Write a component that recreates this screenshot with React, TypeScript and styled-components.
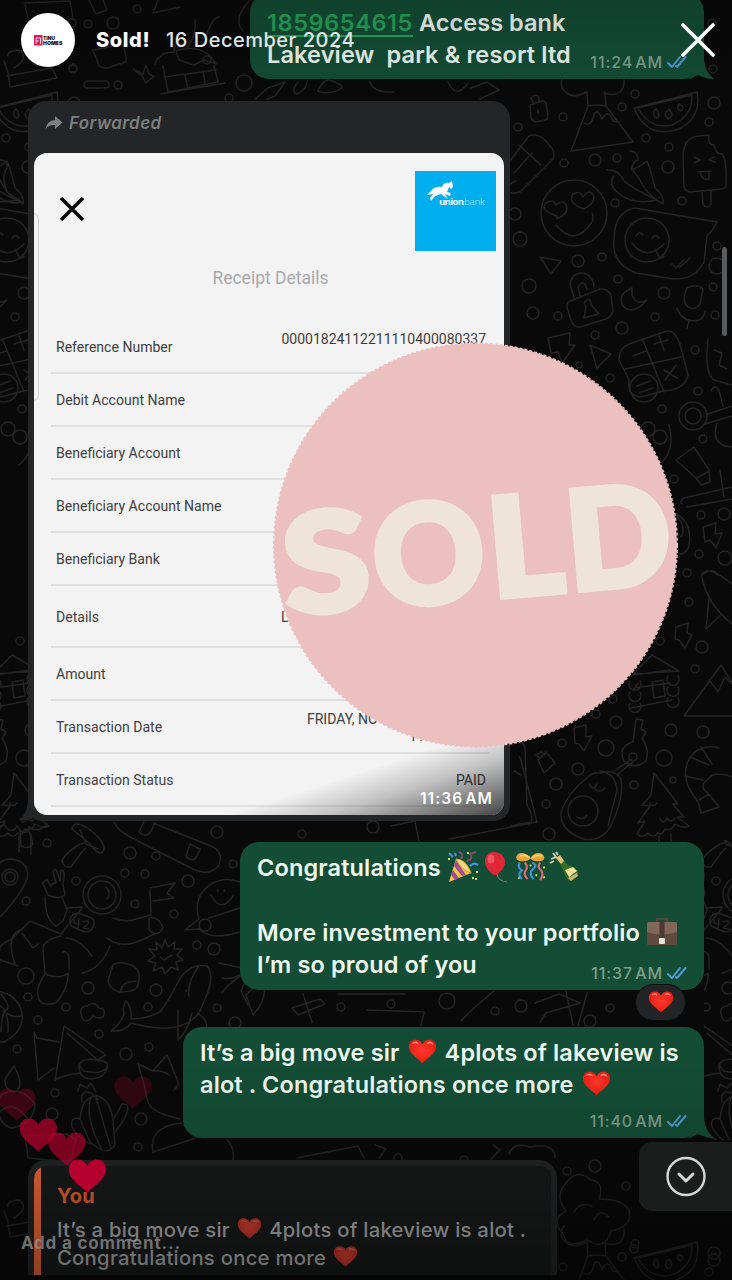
import React from 'react';
import styled, { createGlobalStyle } from 'styled-components';

const Global = createGlobalStyle`
  *, *::before, *::after { box-sizing: border-box; }
  body { margin: 0; background: #0a0a0a; }
`;

const Screen = styled.main`
  position: relative;
  width: 732px;
  height: 1280px;
  overflow: hidden;
  background: #090909;
  font-family: Inter, "Liberation Sans", sans-serif;
`;

const Wallpaper = styled.svg`
  position: absolute;
  inset: 0;
`;

const Chat = styled.section`
  position: relative;
  display: flex;
  flex-direction: column;
  height: 1275px;
  padding: 0 28px;
  overflow: hidden;
`;

const Bubble = styled.article<{ $width: number; $height: number; $top: number }>`
  position: relative;
  flex: none;
  align-self: flex-end;
  width: ${p => p.$width}px;
  height: ${p => p.$height}px;
  margin-top: ${p => p.$top}px;
  padding: 9px 17px;
  border-radius: 19px;
  background: #134d35;
`;

const Tail = styled.svg`
  position: absolute;
  right: -10px;
  bottom: 0;
`;

const Line = styled.p<{ $spacing?: number }>`
  display: flex;
  align-items: center;
  height: 32.5px;
  margin: 0;
  color: #eef8f1;
  font-size: 23.5px;
  font-weight: 600;
  white-space: pre;
  letter-spacing: ${p => p.$spacing ?? 0.14}px;
`;

const FirstBubbleText = styled.div`
  padding-top: 4px;
`;

const AccountLink = styled.span`
  color: #25a25a;
  letter-spacing: 0.6px;
  text-decoration: underline;
  text-decoration-thickness: 2px;
  text-underline-offset: 4px;
`;

const Stamp = styled.div`
  position: absolute;
  right: 17px;
  bottom: 8px;
  display: flex;
  align-items: center;
  gap: 4px;
  color: #7c9f8d;
  font-size: 16px;
  font-weight: 500;
  line-height: 18px;
  letter-spacing: 0.9px;
  word-spacing: -3px;
`;

const Reaction = styled.div`
  position: absolute;
  right: 18px;
  bottom: -31px;
  display: flex;
  align-items: center;
  justify-content: center;
  width: 51px;
  height: 37px;
  border: 1px solid #0c0d0d;
  border-radius: 19px;
  background: #222425;
`;

const ForwardCard = styled.article`
  position: relative;
  display: flex;
  flex: none;
  flex-direction: column;
  width: 482px;
  height: 720px;
  margin-top: 22px;
  padding: 0 6px 6px;
  border-radius: 18px 18px 16px 14px;
  background: #232526;
`;

const CardTail = styled.svg`
  position: absolute;
  left: -9px;
  bottom: 0;
`;

const ForwardLabel = styled.header`
  display: flex;
  align-items: center;
  gap: 6px;
  height: 52px;
  padding: 0 0 8px 11px;
  color: #7d7e7f;
  font-size: 17px;
  font-style: italic;
  font-weight: 600;
  letter-spacing: 0.4px;
`;

const Receipt = styled.div`
  position: relative;
  display: flex;
  flex-direction: column;
  height: 662px;
  padding: 18px 14px 0 17px;
  overflow: hidden;
  border-radius: 13px;
  background: #f3f3f3;
  color: #404040;
  font-family: Roboto, sans-serif;
`;

const ReceiptEdge = styled.i`
  position: absolute;
  top: 60px;
  left: -8px;
  width: 13px;
  height: 188px;
  border: 1px solid #cfcfcf;
  border-radius: 6px;
`;

const ReceiptTop = styled.div`
  display: flex;
  justify-content: space-between;
  height: 92px;
  margin-right: -6px;
`;

const CloseReceipt = styled.svg`
  margin: 25px 0 0 8px;
`;

const BankLogo = styled.div`
  width: 81px;
  height: 80px;
  background: #00adef;
`;

const ReceiptTitle = styled.h1`
  height: 58px;
  margin: 0;
  color: #a9a9ab;
  font-size: 17.5px;
  font-weight: 400;
  line-height: 31px;
  text-align: center;
`;

const Row = styled.div<{ $height?: number }>`
  display: flex;
  flex: none;
  align-items: center;
  justify-content: space-between;
  height: ${p => p.$height ?? 53}px;
  padding: 1px 4px 0 5px;
  border-bottom: 2px solid #e0e0e0;
  font-size: 14.05px;
`;

const Value = styled.span`
  align-self: flex-start;
  margin-top: 9px;
  font-size: 14px;
  line-height: 17px;
  text-align: right;
  white-space: pre;
`;

const StatusValue = styled.span`
  font-size: 14px;
`;

const Shade = styled.div`
  position: absolute;
  right: 0;
  bottom: 0;
  width: 100%;
  height: 85px;
  background: linear-gradient(162deg, transparent 62%, rgba(0, 0, 0, 0.2) 76%, rgba(0, 0, 0, 0.72) 100%);
`;

const PhotoTime = styled.time`
  position: absolute;
  right: 11px;
  bottom: 6px;
  color: #fff;
  font-family: Inter, sans-serif;
  font-size: 15.5px;
  font-weight: 600;
  line-height: 20px;
  letter-spacing: 1.1px;
  word-spacing: -3px;
`;

const Quote = styled.article`
  display: flex;
  flex: none;
  width: 529px;
  height: 135px;
  margin-top: 22px;
  padding: 6px;
  border-radius: 18px;
  background: #232526;
`;

const QuoteBody = styled.div`
  flex: 1;
  display: flex;
  overflow: hidden;
  border-radius: 13px 10px 0 0;
  background: #191b1b;
`;

const QuoteBar = styled.i`
  width: 7px;
  background: #f06a38;
`;

const QuoteContent = styled.div`
  padding: 16px 0 0 16px;
`;

const QuoteName = styled.strong`
  display: block;
  color: #e8612f;
  font-size: 20px;
  font-weight: 700;
  line-height: 28px;
  letter-spacing: 0.3px;
`;

const QuoteLine = styled.p`
  display: flex;
  align-items: center;
  height: 28px;
  margin: 0;
  color: #b2b4b4;
  font-size: 20.3px;
  font-weight: 550;
  letter-spacing: 0.25px;
  white-space: pre;
`;

const QuoteText = styled.div`
  margin-top: 5.5px;
`;

const Glyph = styled.svg<{ $raise?: number; $left?: number; $right?: number }>`
  flex: none;
  margin: 0 ${p => p.$right ?? 0}px ${p => p.$raise ?? 0}px ${p => p.$left ?? 0}px;
`;

const Sticker = styled.svg`
  position: absolute;
  top: 341px;
  left: 271px;
`;

const Letter = styled.text`
  fill: #eee4da;
  stroke: #eee4da;
  stroke-width: 5.5px;
  stroke-linejoin: miter;
  font-family: Lato, sans-serif;
  font-size: 138px;
  font-weight: 900;
`;

const Veil = styled.div`
  position: absolute;
  inset: 0;
  background: linear-gradient(to bottom, rgba(0, 0, 0, 0.16), transparent 110px, transparent 1060px, rgba(0, 0, 0, 0.1) 1140px, rgba(0, 0, 0, 0.42) 1280px);
`;

const StoryHeader = styled.header`
  position: absolute;
  top: 13px;
  left: 21px;
  right: 17px;
  display: flex;
  align-items: center;
  height: 54px;
  color: #fff;
  font-size: 20px;
  white-space: nowrap;
`;

const Avatar = styled.div`
  width: 54px;
  height: 54px;
  margin-right: 21px;
  border-radius: 50%;
  background: #fff;
`;

const Title = styled.strong`
  width: 70px;
  font-weight: 850;
  letter-spacing: 0.6px;
`;

const Posted = styled.span`
  flex: 1;
  color: #e2e6e4;
  font-weight: 550;
  letter-spacing: 0.5px;
`;

const ScrollThumb = styled.div`
  position: absolute;
  top: 247px;
  right: 5px;
  width: 5px;
  height: 89px;
  border-radius: 3px;
  background: #58595a;
`;

const Jump = styled.button`
  position: absolute;
  top: 1142px;
  right: 0;
  display: flex;
  align-items: center;
  justify-content: center;
  width: 93px;
  height: 69px;
  padding: 0;
  border: 0;
  border-radius: 13px 0 0 13px;
  background: #1b1c1c;
`;

const FloatingHearts = styled.svg`
  position: absolute;
  top: 1070px;
  left: 0;
`;

const Comment = styled.div`
  position: absolute;
  top: 1231px;
  left: 21px;
  color: rgba(150, 150, 150, 0.72);
  font-size: 17px;
  font-weight: 700;
  line-height: 24px;
  letter-spacing: 0.8px;
`;

const HEART = 'M16 28C12 23 1 18 1 9.5C1 4.5 4.6 2 8.4 2C12 2 14.6 4 16 7C17.4 4 20 2 23.6 2C27.4 2 31 4.5 31 9.5C31 18 20 23 16 28Z';

const RedHeart = ({ size = 29, muted = false, left = 0, right = 0 }: { size?: number; muted?: boolean; left?: number; right?: number }) => (
  <Glyph width={size} height={size} viewBox="0 0 32 30" $raise={2} $left={left} $right={right}>
    <defs>
      <radialGradient id={`red${size}`} cx=".5" cy=".45" r=".6">
        <stop offset="0" stopColor={muted ? '#e04433' : '#ff3a2c'} />
        <stop offset="1" stopColor={muted ? '#bd3025' : '#e8190f'} />
      </radialGradient>
    </defs>
    <path d={HEART} fill={`url(#red${size})`} />
    <path d="M4 7Q5 4 9 4Q12 5 12 7Q7 5 4 7M20 7Q21 4 24 4Q28 5 28 8Q25 5 20 7" fill="#fff" opacity={muted ? 0.25 : 0.45} />
  </Glyph>
);

const Popper = () => (
  <Glyph width="32" height="32" viewBox="0 0 32 32" $raise={1}>
    <path d="M2 31L9 8Q18 10 24 22Z" fill="#fbc43b" />
    <path d="M7 15L15 25L19 24L9 9ZM4 24L8 29L12 27L6 19Z" fill="#a44b9d" />
    <path d="M9 8Q19 8 24 22Q15 20 9 8Z" fill="#f5d982" stroke="#dd9d20" />
    <path d="M14 8Q17 3 12 1M20 10Q27 8 23 3L29 1" fill="none" stroke="#8b4a68" strokeWidth="2" />
    <path d="M23 15Q27 11 31 14M2 2L6 6M8 2L9 5" fill="none" stroke="#3f97dd" strokeWidth="2.2" />
    <path d="M20 1h2v2h-2zM29 20h2v2h-2zM28 27h2v2h-2zM1 7h2v2H1zM25 26h2v2h-2z" fill="#d5e94b" />
  </Glyph>
);

const Balloon = () => (
  <Glyph width="27" height="32" viewBox="0 0 27 32" $left={3} $right={6}>
    <path d="M15 23Q16 30 25 31" fill="none" stroke="#6c7d6d" strokeWidth="1.2" />
    <path d="M12 1C18 1 23 5 23 11C23 17 17 22 15 24H12C7 21 3 16 3 10C3 5 7 1 12 1Z" fill="#df2637" />
    <ellipse cx="9" cy="8" rx="3.5" ry="4.5" fill="#f36b70" opacity=".7" />
  </Glyph>
);

const Streamers = () => (
  <Glyph width="31" height="31" viewBox="0 0 32 32" $raise={1}>
    <path d="M5 12Q2 17 7 20Q2 24 7 29M18 12Q24 15 18 19Q14 23 19 29" fill="none" stroke="#3c93dc" strokeWidth="2.2" />
    <path d="M10 12Q14 16 11 20Q8 24 13 29M26 12Q22 17 27 20Q30 24 26 30" fill="none" stroke="#dd6b70" strokeWidth="2.2" />
    <path d="M16 7Q10 0 3 3Q-1 8 4 10Q12 12 16 8Q20 12 28 10Q33 7 28 3Q21 0 16 7Z" fill="#e9a336" />
    <path d="M5 5Q11 3 15 7M18 7Q22 3 28 5" fill="none" stroke="#fbd070" strokeWidth="2" />
    <path d="M3 27h2v2H3zM21 24h2v2h-2zM29 26h2v2h-2zM15 14h2v2h-2zM29 16h2v2h-2z" fill="#c7dd4d" />
  </Glyph>
);

const Champagne = () => (
  <Glyph width="31" height="32" viewBox="0 0 31 32" $left={3} $raise={1}>
    <path d="M8 7L11 5L18 13L27 18Q30 20 29 24L22 30Q18 29 16 24L13 17Z" fill="#357021" />
    <path d="M16 19L24 16L28 20L20 26Z" fill="#f2df9e" />
    <path d="M19 27L28 22L29 25L22 30Z" fill="#ccb175" />
    <path d="M7 7L11 4L15 10L12 13Z" fill="#dfc278" />
    <path d="M2 8L7 6L4 2M1 12L5 10M7 1L9 4" fill="none" stroke="#d5d5b8" strokeWidth="1.8" />
  </Glyph>
);

const Briefcase = () => (
  <Glyph width="32" height="30" viewBox="0 0 32 30">
    <path d="M11 5V2H21V5" fill="none" stroke="#56453d" strokeWidth="2" />
    <path d="M1 7Q1 5 3 5H29Q31 5 31 7V27Q31 28 29 28H3Q1 28 1 27Z" fill="#604a40" />
    <path d="M1 7Q1 5 3 5H29Q31 5 31 7V15Q16 20 1 15Z" fill="#80675a" />
    <path d="M13.500 5H18.500V23H13.500Z" fill="#4b3931" />
    <rect x="13" y="21" width="6" height="6" rx="1" fill="#e9e3dd" />
  </Glyph>
);

const Ticks = () => (
  <svg width="20" height="14" viewBox="0 0 20 14" fill="none" stroke="#4f9bd8" strokeWidth="2" strokeLinecap="round" strokeLinejoin="round">
    <path d="M1 8L5 12L13 2M9 11L10 12L18.5 2" />
  </svg>
);

const SentAt = ({ time }: { time: string }) => (
  <Stamp>{time}<Ticks /></Stamp>
);

const BubbleTail = () => (
  <Tail width="30" height="30" viewBox="0 0 30 30">
    <path d="M20 0V10Q21 23 30 30Q22 30 14 26L6 30L0 20Z" fill="#134d35" />
  </Tail>
);

const DOTS: [number, number, number][] = [
  [137, 9, 4], [88, 24, 4], [113, 23, 6], [73, 68, 4], [118, 85, 4], [244, 83, 8], [229, 98, 4], [207, 60, 4],
  [712, 23, 4], [713, 69, 4], [622, 107, 4], [635, 94, 4], [563, 117, 4], [518, 127, 4], [714, 103, 6], [709, 122, 4],
  [646, 138, 4], [669, 147, 4], [595, 160, 6], [564, 163, 4], [617, 158, 4], [668, 167, 6], [682, 201, 4], [615, 203, 4],
  [515, 214, 6], [520, 239, 7], [578, 261, 6], [602, 257, 4], [529, 286, 7], [618, 279, 4], [664, 293, 6], [717, 246, 4],
  [717, 266, 8], [533, 313, 6], [558, 316, 4], [622, 328, 6], [655, 317, 4], [595, 335, 4], [715, 315, 4], [713, 287, 4],
  [579, 365, 3], [610, 378, 4], [695, 350, 4], [698, 391, 4], [662, 409, 4], [703, 439, 4], [674, 479, 4], [701, 515, 4],
  [724, 514, 6], [699, 554, 4], [687, 573, 4], [725, 558, 7], [689, 602, 4], [660, 641, 4], [702, 647, 6], [695, 669, 4],
  [613, 699, 4], [596, 714, 4], [616, 722, 6], [671, 730, 6], [703, 732, 6], [562, 743, 4], [606, 748, 8], [664, 758, 8],
  [578, 769, 6], [556, 784, 6], [634, 785, 4], [673, 780, 3], [546, 804, 4], [549, 834, 6], [373, 827, 6], [302, 834, 4],
  [47, 843, 4], [130, 853, 6], [156, 856, 4], [217, 832, 6], [125, 873, 4], [145, 874, 4], [76, 881, 4], [188, 881, 6],
  [233, 864, 4], [26, 901, 4], [135, 904, 4], [174, 914, 4], [197, 945, 4], [214, 949, 6], [26, 976, 8], [88, 988, 6],
  [156, 990, 6], [28, 997, 4], [66, 1007, 4], [148, 1007, 4], [217, 1008, 4], [38, 1020, 4], [99, 1034, 4], [235, 1023, 6],
  [17, 1049, 4], [126, 1054, 6], [149, 1047, 4], [55, 1093, 4], [52, 1114, 6], [141, 1119, 6], [138, 1147, 4],
  [341, 1007, 4], [391, 1004, 4], [447, 1001, 8], [495, 1011, 4], [521, 1006, 6], [590, 1021, 6], [610, 1008, 4],
  [398, 1158, 4], [464, 1160, 4], [567, 1171, 4], [595, 1166, 6], [626, 1186, 4], [634, 1249, 4], [714, 1260, 6],
];

const SHAPES: string[] = [
  // padlock, volcano and its cloud
  'M530 105L542 101Q545 100 546 104L548 115Q548 119 545 120L536 122Q532 121 531 118ZM533 103L531 98Q535 93 539 97L539 102M538 110v3',
  'M571 151L588 106Q597 104 606 106L633 142ZM584 123Q591 128 594 114Q598 108 602 119Q608 108 613 121L619 122M588 106L587 92M606 106L605 92M586 92Q571 101 562 88Q559 76 570 72M604 93Q625 99 624 79',
  // watermelon
  'M634 108L697 92Q702 120 676 130Q646 138 634 108ZM638 108L692 95Q693 116 672 125Q650 130 638 108M656 109Q651 114 656 118Q662 116 656 109M669 109Q662 114 668 119Q675 116 669 109M679 104Q675 109 681 111Q686 107 679 104',
  // pencil
  'M509 162L529 136Q536 133 544 139L551 147Q556 153 553 159L520 192Q510 195 504 190M519 145L541 165M514 173L532 153M504 187L516 181',
  // popsicle
  'M684 187L683 155Q684 137 699 136L709 135Q707 145 714 145Q716 155 722 154Q727 160 726 184Q727 188 722 189L690 192Q685 191 684 187M702 192L703 204Q707 210 711 204V191M694 157l6 3l-6 3M714 157l-5 3l6 2M698 172L711 171M700 172Q702 181 709 179L709 171',
  // chillies
  'M607 170Q619 169 624 181Q635 190 657 200Q633 206 617 192Q608 184 614 176M630 151Q638 151 638 160Q632 161 632 170Q641 166 647 161Q651 170 655 188Q665 196 663 204Q648 195 642 184Q638 175 631 169',
  // heart-eyes face
  'M541 213a33 33 0 1 0 66 0a33 33 0 1 0-66 0M557 216Q539 210 546 203Q553 198 556 205Q564 198 567 207Q568 214 557 219ZM584 209Q567 203 573 194Q580 190 583 197Q590 187 594 197Q594 204 584 209M556 225Q575 248 592 222Q594 217 592 213',
  // talking face
  'M635 208L717 222Q714 229 707 236L704 262Q693 283 667 278L636 273Q611 263 614 240Q614 211 635 208ZM625 240a22 22 0 1 0 44 0a22 22 0 1 0-44 0M636 236q3-6 7-1M652 238q4-5 7 0M632 243Q646 262 664 244M656 251q4 10 8 5M672 264l4 4l8-8M680 267l10-9',
  'M540 257L561 261L551 274ZM590 345L611 354L597 368ZM548 338L570 333L569 345L575 345L562 363L558 352L551 353Z',
  // padlock and moon
  'M568 302L600 289Q607 288 611 295L613 311Q612 316 606 319L580 327Q574 328 571 320L567 308Q567 304 568 302M574 298L570 284Q572 272 584 273Q594 277 594 288M580 296L578 287Q584 277 587 290M587 300Q582 303 586 307L584 318L599 314L591 305Q592 299 587 300',
  'M632 288Q617 294 623 306Q633 316 647 300Q636 306 632 295Z',
  // microphone
  'M687 288Q697 283 703 289L700 304Q695 311 688 307Q681 300 687 288M677 308Q681 321 696 321Q703 320 705 312M689 321L687 328',
  // calculator
  'M629 344L667 331Q675 330 680 344L688 375Q685 390 663 391L641 397Q627 396 629 380L619 360Q619 348 629 344M642 338L664 392M625 369L681 357M633 356l13-5M654 344l14-4M659 336l5 14M664 370l13 8M676 365l-11 15M630 388a14 14 0 1 0 28 0a14 14 0 1 0-28 0M637 386l13-5M639 393l14-5',
  'M708 339Q704 373 714 380L732 385M714 350l8 3l-3 12l8 4M679 416a14 14 0 1 0 28 0a14 14 0 1 0-28 0M685 416a8 8 0 1 0 16 0a8 8 0 1 0-16 0M708 414L732 406M711 391q4-8 8 0l4 15M705 424L732 416M717 423q-7 22 14 24',
  // paw
  'M641 429a7 7 0 1 0 14 0a7 7 0 1 0-14 0M653 437a7 7 0 1 0 14 0a7 7 0 1 0-14 0M669 425Q676 451 659 465',
  // bottle, mallet
  'M676 460L694 447L709 470L710 482L701 485L696 478ZM676 460L679 463M697 478L709 471M682 504Q679 502 684 498L732 487M687 507L732 499M720 470L724 497',
  'M673 512Q693 521 689 546Q685 557 675 553M676 515Q687 528 681 537M703 527L716 523L715 534L722 533L716 548L710 540L705 542ZM676 627L688 623L687 633L692 635L685 648L679 640L675 639ZM574 728L586 725L586 737L592 736L584 751L579 744L575 743Z',
  // rocket
  'M701 576Q706 563 732 584M702 577Q707 604 732 624M709 598L706 629L722 614M703 574q11-7 14 1',
  // cabin
  'M633 674L652 655L679 671ZM634 675L670 670M634 688L670 683M631 708L672 700M638 683L634 689M652 682L663 680L665 696L654 698ZM630 681a6 6 0 1 0 10 0M630 692a6 6 0 1 0 10 0M630 703a6 6 0 1 0 10 0M668 676a6 6 0 1 0 10 0M668 687a6 6 0 1 0 10 0M668 698a6 6 0 1 0 10 0',
  'M684 716L721 665L745 704M709 680L713 685L718 692L725 677L732 684M684 716H732',
  // key and avocado
  'M633 742L636 719L643 720L641 729L646 732L642 738Q651 752 645 762Q634 770 624 761Q617 747 633 742M629 757a4 4 0 1 0 8 0a4 4 0 1 0-8 0M614 771L632 759M618 774L634 761',
  'M600 773Q614 768 621 779Q624 796 613 821Q604 843 583 839Q559 830 561 812Q568 792 588 777Q593 772 600 773M600 771Q616 773 617 791Q612 808 608 826M568 811a15 15 0 1 0 30 0a15 15 0 1 0-30 0M589 784q4 8 8 0M595 789q5 5 10-1M577 817q6 4 10-2',
  'M538 760L546 752L555 763L544 773ZM540 758L536 755L541 752L545 755',
  // pine tree
  'M654 773L678 804L673 804L684 817L677 817L689 826Q682 829 675 824Q671 832 665 829Q662 836 658 833Q653 839 648 833Q642 839 637 834L645 821L638 823L650 806L642 805L651 795ZM649 803q4 5 8 0M660 818q3 8 7 0q4 6 8 0M659 836V852M671 834V854',
  // shrimp
  'M719 748Q701 743 690 757Q681 773 690 790L699 804L701 813L719 807L708 793Q698 787 708 779Q715 770 732 777M690 757L709 765M685 776L703 780M701 747L712 764M699 800L709 794',
  // card and chair behind the receipt
  'M511 742Q522 738 525 748L527 805Q534 817 531 822L511 826M514 771L521 775M520 757L537 822L449 839M391 826L415 821L419 842',
  // snow-covered tree and mushroom
  'M-8 822Q0 830 4 824Q11 836 17 826Q25 838 29 827Q38 834 47 824M20 830L21 846Q27 850 33 844L29 831',
  'M72 829Q74 820 86 827Q105 840 104 850Q100 858 89 843L72 829M84 843L80 844Q68 851 62 860Q63 868 71 867L81 853L86 848M80 830L86 844L98 849',
  // skateboard
  'M114 822Q118 831 132 838L193 869Q210 877 219 865Q224 852 211 846L153 823M144 821L139 832Q149 841 154 824M190 844L186 856Q195 866 200 849Z',
  'M-8 875Q-2 859 11 859Q30 861 27 879Q21 895 0 917M2 877a8 8 0 1 0 16 0a8 8 0 1 0-16 0M5 877a5 5 0 1 0 10 0a5 5 0 1 0-10 0',
  // astronaut
  'M83 895a19 19 0 1 0 38 0a19 19 0 1 0-38 0M88 895a14 14 0 1 0 28 0a14 14 0 1 0-28 0M106 887Q112 893 107 899',
  'M44 886Q40 882 47 880L51 886Q54 882 56 883L53 871Q56 865 60 881L61 870Q66 870 63 884L65 895Q59 900 48 895ZM45 897Q45 920 56 926L63 921Q68 908 67 910L62 897M67 908L82 907M82 908L61 934M61 934L30 921L12 939Q-2 945 0 950M22 933L33 948L38 944M61 936Q43 940 43 949L45 974Q32 993 42 1003Q54 1007 60 998Q69 984 68 973Q60 980 45 974M69 969V956Q65 950 63 952M66 938Q80 939 92 956M107 938Q122 951 148 937L155 934M113 918Q126 923 136 919L151 915M110 946Q101 969 82 973M0 960L18 966M20 930Q5 936 15 964',
  'M150 890L151 914M150 888L175 883L167 893L174 898L153 901M149 918Q158 915 163 928Q158 938 149 930ZM78 913L92 918Q96 922 92 929Q87 934 80 930L71 926Q67 915 78 913',
  // balloon face
  'M240 882Q222 875 207 887Q193 900 199 919L185 930L199 929Q211 941 239 932M199 925a6 6 0 1 0 12 0a6 6 0 1 0-12 0M211 895Q221 914 233 896M218 890v1M224 890v1M209 918L240 908',
  // starburst, stone
  'M165 940L168 947L175 942L174 949L182 949L177 955L183 960L176 962L178 970L171 967L165 974L162 967L153 971L156 963L148 961L155 956L149 949L157 950L156 942L162 948ZM160 957l4 3l8-5',
  'M113 965Q119 960 133 966Q142 971 138 984Q138 992 120 992Q109 989 108 981ZM121 991Q121 982 136 981',
  // whale
  'M111 1031Q119 1026 124 1014Q122 1006 126 1001Q132 1007 131 1019Q147 1019 160 1012Q171 997 179 980Q190 963 207 966Q214 975 208 992L199 1013Q180 1037 131 1023Q125 1032 111 1031M199 966Q187 982 189 996M178 1010L178 1040Q188 1031 192 1013M198 1013Q209 1022 206 1028M186 990v1',
  'M81 1014Q79 1007 87 1006Q95 1000 99 1008Q107 1008 103 1017Q97 1019 93 1016Q84 1027 81 1014',
  'M-8 991Q14 991 21 1009Q27 1030 4 1042L-6 1042M0 1006Q9 1010 8 1032M3 1011Q16 1020 22 1015M1 994Q13 1009 4 1011Q1 1022 1 1032',
  'M34 1032L38 1080L54 1068M34 1032L37 1038L59 1042M64 1026L55 1080Q64 1075 80 1073M64 1026L106 1055L97 1060M67 1033L99 1061',
  'M79 1065Q83 1057 99 1060Q110 1062 107 1068Q100 1075 84 1071ZM79 1066Q79 1078 90 1079Q106 1078 107 1067',
  // cactus and fox
  'M82 1102Q80 1089 91 1093L98 1099M80 1119Q82 1096 97 1096Q111 1099 113 1122L115 1145Q108 1155 98 1148L90 1142ZM91 1098Q84 1116 102 1150M96 1098Q103 1121 111 1149M78 1091L80 1084L87 1088L91 1083L96 1092M80 1119Q70 1116 72 1127Q79 1140 91 1144M113 1121L122 1104Q133 1103 123 1121L114 1134',
  'M144 1084L138 1064L153 1071L167 1055L177 1079Q180 1085 174 1090M144 1084Q148 1109 154 1109Q159 1114 180 1119M153 1071Q162 1070 169 1075M153 1152Q148 1127 181 1123L199 1137Z',
  'M14 1066L5 1079Q4 1090 14 1092Q26 1088 14 1066M0 1096Q-6 1124 12 1128Q34 1124 35 1104Q18 1083 0 1096M0 1112Q13 1099 27 1118M25 1136L28 1158L70 1162L76 1140L66 1134Z',
  // birthday cup, pill and hut
  'M25 5L28 18M24 3L70 1L73 18M89 0L96 14L107 10L103 0M153 13L158 0M153 13L180 7',
  'M94 50Q91 49 96 57L99 66Q106 70 113 66L126 62Q127 54 122 44ZM84 85Q84 81 88 81H106Q110 81 109 87Q108 88 88 88Q84 88 84 85M133 69L143 74L146 65L149 74L154 76L146 83L142 76Z',
  'M155 64Q159 52 174 52L176 42M176 51Q198 44 211 57L216 64L204 60L194 65L179 60ZM163 66L168 92L218 82L214 66M164 77L216 70M185 75L188 89M203 71L205 83M161 94L225 83M186 49Q197 36 195 20M204 44Q210 19 219 17',
  'M4 61L8 72L10 87L57 78L52 68L7 76M8 56Q7 51 19 50Q30 58 14 68M33 50Q43 50 40 64Q29 68 33 50',
  'M0 160Q8 160 7 168Q0 178 8 193L22 202Q11 205 0 198M250 0Q232 19 243 31M298 82Q290 92 297 94Q306 90 307 82M318 91Q325 75 334 82Q350 87 333 92Q322 94 318 91M255 99L268 88L285 82L275 96L267 99M370 82Q373 93 394 92M448 82Q456 100 468 83M471 88L487 82L499 90L480 99',
  // leaves, bamboo and scraps between messages
  'M219 963L247 969Q234 981 222 978M222 992Q234 978 249 971L241 991L248 1005M246 995L263 978Q269 998 253 1015ZM292 1008L320 999L325 1004L298 1015ZM303 994L312 1022M337 994H405M367 1010L424 1012L421 1026M461 1021Q472 1009 494 991M535 1003L559 994L580 1003L546 1013L540 1022M566 991L573 1025M587 993L578 1026',
  'M297 1158L358 1146L364 1158M227 1140Q235 1148 233 1160M375 1145L386 1149L379 1158M493 1145L500 1150L491 1159M509 1154Q514 1141 530 1147Q555 1142 555 1158',
  // flower cloud
  'M566 1183Q577 1168 591 1180Q605 1182 599 1199Q623 1199 629 1210Q633 1227 611 1231Q605 1252 587 1240Q568 1250 563 1234Q550 1219 566 1211Q554 1196 566 1183M574 1212Q580 1201 592 1206M594 1220Q599 1207 609 1217',
];

const Doodles = () => (
  <Wallpaper width="732" height="1280" fill="none" stroke="#242424" strokeWidth="1.5" strokeLinejoin="round" strokeLinecap="round" aria-hidden>
    <defs>
      <g id="doodles">
        {SHAPES.map(d => <path key={d.slice(0, 24)} d={d} />)}
        {DOTS.map(([x, y, r]) => <circle key={`${x}-${y}`} cx={x} cy={y} r={r} />)}
        <path d="M74 918L74 923L80 924M79 919L78 928M83 922Q90 919 88 924L83 928L89 929" />
      </g>
    </defs>
    <use href="#doodles" />
    <use href="#doodles" x="-640" />
    <svg x="704" y="840" width="28" height="300" viewBox="704 840 28 300"><use href="#doodles" x="640" /></svg>
    <svg x="0" y="1175" width="30" height="105" viewBox="0 1175 30 105"><use href="#doodles" y="1150" /></svg>
    <svg x="557" y="1225" width="175" height="55" viewBox="557 1225 175 55"><use href="#doodles" y="1150" /></svg>
  </Wallpaper>
);

const ROWS: { label: string; value?: string; height?: number }[] = [
  { label: 'Reference Number', value: '00001824112211110400080337' },
  { label: 'Debit Account Name' },
  { label: 'Beneficiary Account' },
  { label: 'Beneficiary Account Name' },
  { label: 'Beneficiary Bank' },
  { label: 'Details', height: 62 },
  { label: 'Amount' },
  { label: 'Transaction Date' },
];

const DetailStart = styled.span`
  width: 205px;
  font-size: 14px;
`;

const DateStart = styled.span`
  align-self: flex-start;
  width: 179px;
  margin-top: 9px;
  font-size: 14px;
  line-height: 17px;
  white-space: pre-line;
`;

const DateEnd = styled.span`
  display: block;
  padding-left: 102px;
`;

export default function App() {
  return (
    <>
      <Global />
      <Screen>
        <Doodles />
        <Chat>
          <Bubble $width={454} $height={86} $top={-7}>
            <FirstBubbleText>
              <Line $spacing={0.05}><AccountLink>1859654615</AccountLink> Access bank</Line>
              <Line $spacing={0.14}>Lakeview  park &amp; resort ltd</Line>
            </FirstBubbleText>
            <SentAt time="11:24 AM" />
            <BubbleTail />
          </Bubble>

          <ForwardCard>
            <CardTail width="24" height="24" viewBox="0 0 24 24"><path d="M9 0Q9 17 0 23Q9 24 15 20L24 24V0Z" fill="#232526" /></CardTail>
            <ForwardLabel>
              <svg width="18" height="16" viewBox="0 0 18 16" fill="#7d7e7f"><path d="M10 1L17.5 7.5L10 14V10Q4 9.5 .5 14Q2 5.5 10 5Z" /></svg>
              Forwarded
            </ForwardLabel>
            <Receipt>
              <ReceiptEdge />
              <ReceiptTop>
                <CloseReceipt width="26" height="26" viewBox="0 0 26 26" stroke="#080808" strokeWidth="3.6">
                  <path d="M2 2L24 24M24 2L2 24" />
                </CloseReceipt>
                <BankLogo>
                  <svg width="81" height="80" viewBox="0 0 81 80">
                    <path d="M12 24L16 20Q20 15 27 16Q29 11 34 12L37 10L38 16L36 18L34 16L32 21L36 22L35 25L30 23L33 28L26 23L20 25L16 30L15 27L18 23Z" fill="#fff" />
                    <text x="24" y="34" fill="#e9faff" fontFamily="Open Sans" fontSize="9.6" fontWeight="700" textLength="25">union</text>
                    <text x="49" y="34" fill="#8bdcf8" fontFamily="Open Sans" fontSize="9.6" textLength="21">bank</text>
                  </svg>
                </BankLogo>
              </ReceiptTop>
              <ReceiptTitle>Receipt Details</ReceiptTitle>
              {ROWS.map(r => (
                <Row key={r.label} $height={r.height}>
                  {r.label}
                  {r.value && <Value>{r.value}</Value>}
                  {r.label === 'Details' && <DetailStart>L</DetailStart>}
                  {r.label === 'Transaction Date' && <DateStart>FRIDAY, NO<DateEnd>11</DateEnd></DateStart>}
                </Row>
              ))}
              <Row>Transaction Status<StatusValue>PAID</StatusValue></Row>
              <Shade />
              <PhotoTime>11:36 AM</PhotoTime>
            </Receipt>
          </ForwardCard>

          <Bubble $width={464} $height={148} $top={21}>
            <Line>Congratulations <Popper /><Balloon /><Streamers /><Champagne /></Line>
            <Line />
            <Line>More investment to your portfolio <Briefcase /></Line>
            <Line>I’m so proud of you</Line>
            <SentAt time="11:37 AM" />
            <Reaction><RedHeart size={26} /></Reaction>
          </Bubble>

          <Bubble $width={521} $height={111} $top={37}>
            <Line>It’s a big move sir <RedHeart left={2} right={2} /> 4plots of lakeview is</Line>
            <Line>alot . Congratulations once more <RedHeart left={2} /></Line>
            <SentAt time="11:40 AM" />
            <BubbleTail />
          </Bubble>

          <Quote>
            <QuoteBody>
              <QuoteBar />
              <QuoteContent>
                <QuoteName>You</QuoteName>
                <QuoteText>
                  <QuoteLine>It’s a big move sir <RedHeart size={25} muted left={1} right={2} /> 4plots of lakeview is alot .</QuoteLine>
                  <QuoteLine>Congratulations once more <RedHeart size={25} muted left={1} /></QuoteLine>
                </QuoteText>
              </QuoteContent>
            </QuoteBody>
          </Quote>
        </Chat>

        <ScrollThumb />
        <Veil />

        <Sticker width="410" height="410" viewBox="271 341 410 410">
          <circle cx="475.5" cy="545" r="201.5" fill="#edc0c0" />
          <circle cx="475.5" cy="545" r="201.8" fill="none" stroke="#edc0c0" strokeWidth="1.4" strokeDasharray="3 2" />
          <Letter transform="translate(287 615) rotate(-5) scale(1.14 1)">S</Letter>
          <Letter transform="translate(377 608) rotate(-5)">O</Letter>
          <Letter transform="translate(492 598) rotate(-5) scale(1.04 1)">L</Letter>
          <Letter transform="translate(570 591) rotate(-5)">D</Letter>
        </Sticker>

        <StoryHeader>
          <Avatar>
            <svg width="54" height="54" viewBox="0 0 54 54">
              <rect x="13" y="22" width="8.5" height="10.500" fill="#d91c5c" />
              <path d="M15 31V25H19.500V31M15 28H18" fill="none" stroke="#fff" strokeWidth=".8" />
              <text x="22" y="27.300" fill="#15151b" fontFamily="Inter" fontSize="5.2" fontWeight="900" textLength="12" lengthAdjust="spacingAndGlyphs">TINU</text>
              <text x="22" y="32.300" fill="#15151b" fontFamily="Inter" fontSize="5.2" fontWeight="900" textLength="19.500" lengthAdjust="spacingAndGlyphs">HOMES</text>
            </svg>
          </Avatar>
          <Title>Sold!</Title>
          <Posted>16 December 2024</Posted>
          <svg width="34" height="34" viewBox="0 0 34 34" stroke="#fff" strokeWidth="3.6" strokeLinecap="round"><path d="M2 2L32 32M32 2L2 32" /></svg>
        </StoryHeader>

        <Jump aria-label="Latest messages">
          <svg width="40" height="42" viewBox="0 0 40 42" fill="none" stroke="#d7d7d7" strokeWidth="2.4" strokeLinecap="round" strokeLinejoin="round">
            <circle cx="20" cy="20.5" r="18.5" />
            <path d="M13 18L20 25L27 18" strokeWidth="3" />
          </svg>
        </Jump>

        <FloatingHearts width="160" height="130" viewBox="0 1070 160 130" fill="#b5002e">
          <path d={HEART} opacity=".3" transform="translate(-3 1086) scale(1.24)" />
          <path d={HEART} opacity=".22" transform="translate(113 1074) scale(1.24)" />
          <path d={HEART} opacity=".72" transform="translate(18.5 1116) scale(1.24 1.28)" />
          <path d={HEART} opacity=".65" transform="translate(47 1130) scale(1.24 1.28)" />
          <path d={HEART} transform="translate(67.5 1157) scale(1.24 1.28)" />
        </FloatingHearts>
        <Comment>Add a comment...</Comment>
      </Screen>
    </>
  );
}
